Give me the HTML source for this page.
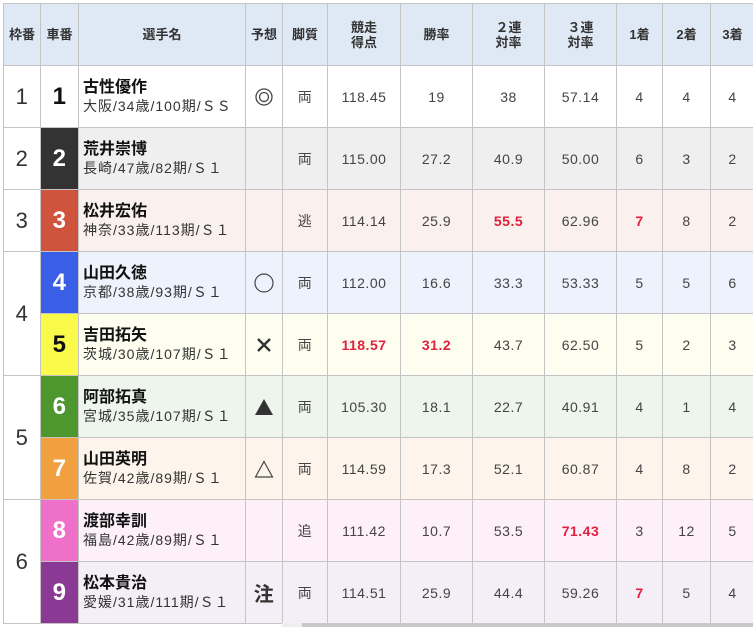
<!DOCTYPE html>
<html><head><meta charset="utf-8"><style>
body{margin:0;background:#fff;font-family:"Liberation Sans","Noto Sans CJK JP",sans-serif;color:#333;}
table{position:absolute;left:3px;top:3px;border-collapse:collapse;table-layout:fixed;width:751px;}
td,th{border:1px solid #c4c4c4;text-align:center;padding:0;font-size:14px;}
th{background:#dfe9f6;height:61px;font-size:13px;font-weight:bold;line-height:15px;color:#333}
td{height:61px;color:#444;letter-spacing:0.5px}
.w{font-size:22px;background:#fff;color:#333}
.c{font-size:24px;font-weight:bold;color:#fff}
.n{text-align:left;padding-left:4px}
.n b{display:block;font-size:16px;color:#111;line-height:20px;letter-spacing:0}
.n span{display:block;font-size:14px;color:#333;line-height:17px;letter-spacing:1px}
.r{color:#e0203c;font-weight:bold}
.m{font-size:20px;color:#333}
svg{display:block;margin:auto}
</style></head><body>
<table>
<colgroup><col style="width:37px"><col style="width:38px"><col style="width:167px"><col style="width:37px"><col style="width:45px"><col style="width:73px"><col style="width:72px"><col style="width:72px"><col style="width:72px"><col style="width:46px"><col style="width:48px"><col style="width:44px"></colgroup>
<tr><th>枠番</th><th>車番</th><th>選手名</th><th>予想</th><th>脚質</th><th>競走<br>得点</th><th>勝率</th><th>２連<br>対率</th><th>３連<br>対率</th><th>1着</th><th>2着</th><th>3着</th></tr>
<tr style="background:#fff"><td class="w">1</td><td class="c" style="color:#111;background:#fff">1</td><td class="n"><b>古性優作</b><span>大阪/34歳/100期/ＳＳ</span></td><td><svg width="18" height="18"><circle cx="9" cy="9" r="8" fill="none" stroke="#444" stroke-width="1.3"/><circle cx="9" cy="9" r="4.5" fill="none" stroke="#444" stroke-width="1.3"/></svg></td><td>両</td><td>118.45</td><td>19</td><td>38</td><td>57.14</td><td>4</td><td>4</td><td>4</td></tr>
<tr style="background:#efefef"><td class="w">2</td><td class="c" style="background:#333">2</td><td class="n"><b>荒井崇博</b><span>長崎/47歳/82期/Ｓ１</span></td><td></td><td>両</td><td>115.00</td><td>27.2</td><td>40.9</td><td>50.00</td><td>6</td><td>3</td><td>2</td></tr>
<tr style="background:#faf0ee"><td class="w">3</td><td class="c" style="background:#d0533d">3</td><td class="n"><b>松井宏佑</b><span>神奈/33歳/113期/Ｓ１</span></td><td></td><td>逃</td><td>114.14</td><td>25.9</td><td class="r">55.5</td><td>62.96</td><td class="r">7</td><td>8</td><td>2</td></tr>
<tr style="background:#eef2fc"><td class="w" rowspan="2">4</td><td class="c" style="background:#3a5fe6">4</td><td class="n"><b>山田久徳</b><span>京都/38歳/93期/Ｓ１</span></td><td><svg width="20" height="20"><circle cx="10" cy="10" r="9" fill="none" stroke="#444" stroke-width="1.2"/></svg></td><td>両</td><td>112.00</td><td>16.6</td><td>33.3</td><td>53.33</td><td>5</td><td>5</td><td>6</td></tr>
<tr style="background:#fefef0"><td class="c" style="background:#fafa4a;color:#111">5</td><td class="n"><b>吉田拓矢</b><span>茨城/30歳/107期/Ｓ１</span></td><td><svg width="16" height="16"><path d="M2 2L14 14M14 2L2 14" stroke="#333" stroke-width="2.4"/></svg></td><td>両</td><td class="r">118.57</td><td class="r">31.2</td><td>43.7</td><td>62.50</td><td>5</td><td>2</td><td>3</td></tr>
<tr style="background:#eef5ec"><td class="w" rowspan="2">5</td><td class="c" style="background:#4e962e">6</td><td class="n"><b>阿部拓真</b><span>宮城/35歳/107期/Ｓ１</span></td><td><svg width="20" height="18"><path d="M10 1L19 17H1Z" fill="#333"/></svg></td><td>両</td><td>105.30</td><td>18.1</td><td>22.7</td><td>40.91</td><td>4</td><td>1</td><td>4</td></tr>
<tr style="background:#fdf5ec"><td class="c" style="background:#f0a03e">7</td><td class="n"><b>山田英明</b><span>佐賀/42歳/89期/Ｓ１</span></td><td><svg width="20" height="18"><path d="M10 1.5L18.5 17H1.5Z" fill="none" stroke="#444" stroke-width="1.2"/></svg></td><td>両</td><td>114.59</td><td>17.3</td><td>52.1</td><td>60.87</td><td>4</td><td>8</td><td>2</td></tr>
<tr style="background:#fdf0f8"><td class="w" rowspan="2">6</td><td class="c" style="background:#ee70c8">8</td><td class="n"><b>渡部幸訓</b><span>福島/42歳/89期/Ｓ１</span></td><td></td><td>追</td><td>111.42</td><td>10.7</td><td>53.5</td><td class="r">71.43</td><td>3</td><td>12</td><td>5</td></tr>
<tr style="background:#f4eff7"><td class="c" style="background:#8a3a94">9</td><td class="n"><b>松本貴治</b><span>愛媛/31歳/111期/Ｓ１</span></td><td class="m" style="font-weight:bold">注</td><td>両</td><td>114.51</td><td>25.9</td><td>44.4</td><td>59.26</td><td class="r">7</td><td>5</td><td>4</td></tr>
</table>
<div style="position:absolute;left:282px;top:623px;width:471px;height:4px;background:#eee"></div>
<div style="position:absolute;left:302px;top:623px;width:451px;height:4px;background:#c8c8c8"></div>
</body></html>
